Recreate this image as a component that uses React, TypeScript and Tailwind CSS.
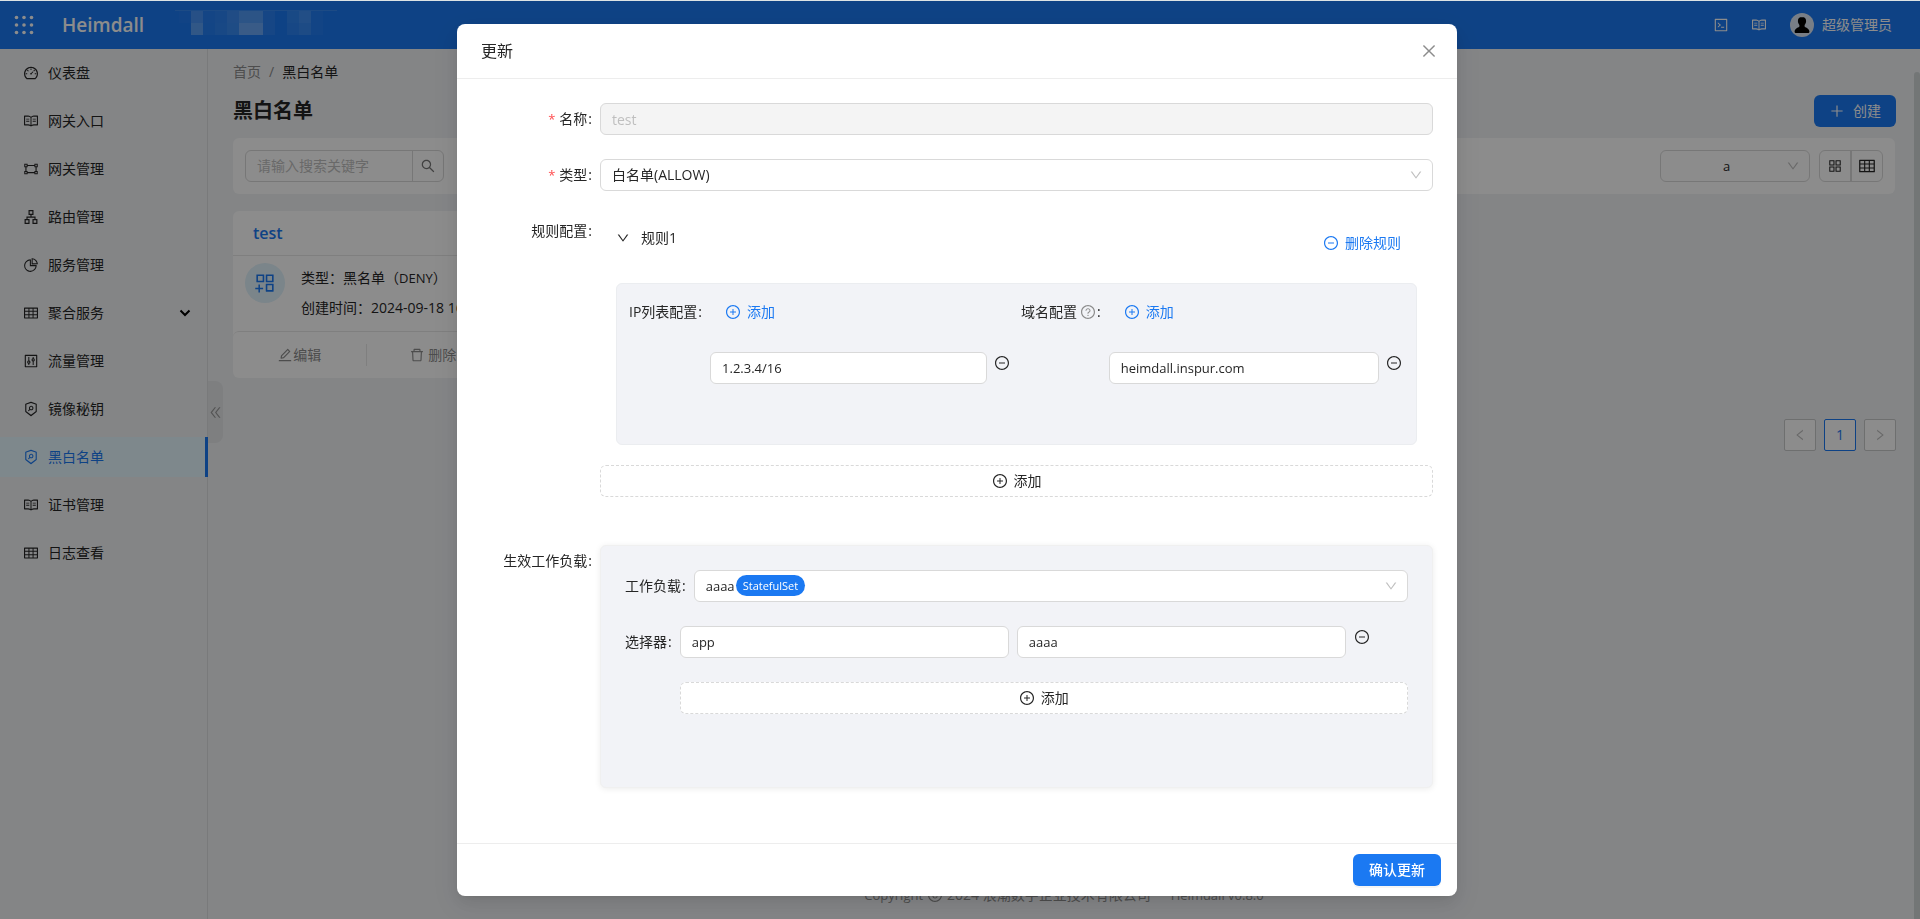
import React, { useId } from 'react';
import {
  AiOutlineApartment,
  AiOutlineAppstore,
  AiOutlineAppstoreAdd,
  AiOutlineClose,
  AiOutlineCode,
  AiOutlineControl,
  AiOutlineCopyright,
  AiOutlineDashboard,
  AiOutlineDelete,
  AiOutlineDoubleLeft,
  AiOutlineDown,
  AiOutlineEdit,
  AiOutlineEye,
  AiOutlineGateway,
  AiOutlineLeft,
  AiOutlineMinusCircle,
  AiOutlinePieChart,
  AiOutlinePlus,
  AiOutlinePlusCircle,
  AiOutlineQuestionCircle,
  AiOutlineRead,
  AiOutlineRight,
  AiOutlineSearch,
  AiOutlineSecurityScan,
  AiOutlineTable,
} from 'react-icons/ai';
import type { IconType } from 'react-icons';

interface MenuItem {
  label: string;
  icon: IconType;
  active?: boolean;
  expandable?: boolean;
}

const MENU: MenuItem[] = [
  { label: '仪表盘', icon: AiOutlineDashboard },
  { label: '网关入口', icon: AiOutlineRead },
  { label: '网关管理', icon: AiOutlineGateway },
  { label: '路由管理', icon: AiOutlineApartment },
  { label: '服务管理', icon: AiOutlinePieChart },
  { label: '聚合服务', icon: AiOutlineTable, expandable: true },
  { label: '流量管理', icon: AiOutlineControl },
  { label: '镜像秘钥', icon: AiOutlineSecurityScan },
  { label: '黑白名单', icon: AiOutlineSecurityScan, active: true },
  { label: '证书管理', icon: AiOutlineRead },
  { label: '日志查看', icon: AiOutlineTable },
];

// [x, y, opacity] of the blurred tenant name
const TENANT_BLOCKS = [
  [4, 1, 0.02], [16, 1, 0.2], [28, 1, 0.05], [40, 1, 0.07], [52, 1, 0.14], [64, 1, 0.24], [76, 1, 0.24], [88, 1, 0.06],
  [112, 1, 0.09], [124, 1, 0.16], [136, 1, 0.03],
  [16, 13, 0.28], [28, 13, 0.04], [40, 13, 0.08], [52, 13, 0.13], [64, 13, 0.34], [76, 13, 0.34], [88, 13, 0.06],
  [112, 13, 0.07], [124, 13, 0.12], [136, 13, 0.03],
];

const inputClass =
  'h-8 w-full min-w-0 rounded-md border border-[#d9d9d9] bg-white text-[13px] text-[#262626] outline-none';

const Header: React.FC = () => (
  <header className="flex h-12 items-center bg-[#1b79f2] pl-[14px] pr-7 text-white">
    <button type="button" aria-label="应用">
      <svg width="20" height="20" viewBox="0 0 20 20" fill="currentColor">
        {[2.5, 10, 17.5].map((y) => [2.5, 10, 17.5].map((x) => <circle key={`${x}-${y}`} cx={x} cy={y} r="1.8" />))}
      </svg>
    </button>
    <span className="ml-7 w-[81px] text-[19px] font-semibold">Heimdall</span>
    <svg className="mb-1 ml-8" width="162" height="26" viewBox="0 0 162 26" fill="#fff">
      <rect width="162" height="1" opacity="0.12" />
      {TENANT_BLOCKS.map(([x, y, opacity]) => (
        <rect key={`${x}-${y}`} x={x} y={y} width="12" height="12" opacity={opacity} />
      ))}
    </svg>
    <div className="ml-auto flex items-center">
      <button type="button" aria-label="终端">
        <AiOutlineCode size={16} />
      </button>
      <button type="button" aria-label="文档" className="ml-[22px]">
        <AiOutlineRead size={16} />
      </button>
      <svg className="ml-[23px] mr-2" width="24" height="24" viewBox="0 0 24 24">
        <circle cx="12" cy="12" r="12" fill="#dbe6f5" />
        <path
          d="M12 4c-2.600 0-4.100 1.600-4.100 4 0 1.400.5 2.900 1.500 3.900v1.500c0 1-4.800 1.500-4.800 5.100 0 1 .5 1.500 1.500 1.500h11.800c1 0 1.500-.5 1.500-1.500 0-3.600-4.800-4.100-4.800-5.100v-1.500c1-1 1.500-2.500 1.500-3.900 0-2.400-1.500-4-4.100-4z"
          fill="#000"
        />
      </svg>
      <span>超级管理员</span>
    </div>
  </header>
);

const Sidebar: React.FC = () => (
  <aside className="relative w-52 shrink-0 border-r border-[#dcdee1]">
    <nav className="flex flex-col gap-2 pt-1">
      {MENU.map(({ label, icon: Icon, active, expandable }) => (
        <a
          key={label}
          href="#"
          className={`-mr-px flex h-10 items-center gap-[9px] border-r-[3px] pl-[23px] pr-[14px] ${
            active ? 'border-[#1b79f2] bg-[#e6f7ff] text-[#1b79f2]' : 'border-transparent text-[#262626]'
          }`}
        >
          <Icon size={16} />
          <span>{label}</span>
          {expandable && (
            <svg className="ml-auto" width="12" height="8" viewBox="0 0 12 8" fill="none" stroke="#000" strokeWidth="2">
              <path d="M1.500 1.500 6 6l4.500-4.500" />
            </svg>
          )}
        </a>
      ))}
    </nav>
    <button
      type="button"
      aria-label="收起菜单"
      className="absolute left-52 top-[332px] flex h-[62px] w-[15px] items-center justify-center rounded-r-lg bg-[#e5e7e9] text-[#999]"
    >
      <AiOutlineDoubleLeft size={15} />
    </button>
  </aside>
);

const Toolbar: React.FC = () => (
  <div className="mt-[11px] flex h-14 items-center rounded-md bg-white px-3">
    <form className="flex h-8 w-[199px] rounded-md border border-[#d9d9d9]">
      <input
        aria-label="搜索"
        placeholder="请输入搜索关键字"
        className="min-w-0 flex-1 bg-transparent px-[11px] outline-none placeholder:text-[#bfbfbf]"
      />
      <button type="button" aria-label="搜索" className="flex w-[31px] items-center justify-center border-l border-[#d9d9d9] text-[#777]">
        <AiOutlineSearch size={16} />
      </button>
    </form>
    <div className="relative ml-auto w-[150px]">
      <select aria-label="命名空间" className={`${inputClass} appearance-none pl-[11px] pr-7 text-center [text-align-last:center]`}>
        <option>a</option>
      </select>
      <AiOutlineDown size={14} className="pointer-events-none absolute right-[10px] top-[9px] text-[#bfbfbf]" />
    </div>
    <div className="ml-[9px] flex h-8 w-16 rounded-md border border-[#d9d9d9] text-[#262626]">
      <button type="button" aria-label="卡片" className="flex flex-1 items-center justify-center">
        <AiOutlineAppstore size={16} />
      </button>
      <button type="button" aria-label="列表" className="flex flex-1 items-center justify-center border-l-2 border-[#d9d9d9]">
        <AiOutlineTable size={18} />
      </button>
    </div>
  </div>
);

const RuleCard: React.FC = () => (
  <article className="rounded-md bg-white">
    <h2 className="flex h-[45px] items-center border-b border-[#e8e8e8] px-5 text-base font-semibold text-[#1b79f2]">test</h2>
    <div className="flex gap-4 px-3 pb-2 pt-[7px]">
      <div className="flex size-10 items-center justify-center rounded-full bg-[#e0f2fb] text-[#1b79f2]">
        <AiOutlineAppstoreAdd size={24} />
      </div>
      <div className="flex flex-col text-[#262626]">
        <span className="leading-[30px]">
          类型：黑名单（<span className="text-[13px]">DENY</span>）
        </span>
        <span className="leading-[30px]">创建时间：2024-09-18 16:02:11</span>
      </div>
    </div>
    <div className="grid h-[47px] grid-cols-3 items-center rounded-md border-t border-[#e8e8e8] text-[#8c8c8c]">
      <button type="button" className="flex h-[22px] items-center justify-center border-r border-[#e8e8e8]">
        <AiOutlineEdit size={16} />
        编辑
      </button>
      <button type="button" className="flex h-[22px] items-center justify-center gap-[3px] border-r border-[#e8e8e8]">
        <AiOutlineDelete size={16} />
        删除
      </button>
      <button type="button" className="flex h-[22px] items-center justify-center gap-[3px]">
        <AiOutlineEye size={16} />
        查看
      </button>
    </div>
  </article>
);

const Pagination: React.FC = () => (
  <div className="-mr-px mt-[41px] flex justify-end gap-2">
    <button type="button" aria-label="上一页" className="flex size-8 items-center justify-center rounded-xs border border-[#c8cacb] bg-white text-[#bfbfbf]">
      <AiOutlineLeft size={14} />
    </button>
    <button type="button" className="flex size-8 items-center justify-center rounded-xs border border-[#1b79f2] bg-white font-medium text-[#1b79f2]">
      1
    </button>
    <button type="button" aria-label="下一页" className="flex size-8 items-center justify-center rounded-xs border border-[#c8cacb] bg-white text-[#bfbfbf]">
      <AiOutlineRight size={14} />
    </button>
  </div>
);

const Label: React.FC<{ htmlFor?: string; required?: boolean; children: React.ReactNode }> = ({
  htmlFor,
  required,
  children,
}) => (
  <label htmlFor={htmlFor} className="flex h-8 shrink-0 items-center justify-end whitespace-nowrap pr-2">
    {required && <span className="mr-1 text-[13px] text-[#ff4d4f]">*</span>}
    {children}
    <span className="ml-px">:</span>
  </label>
);

const FormRow: React.FC<{ label: string; htmlFor?: string; required?: boolean; children: React.ReactNode }> = ({
  label,
  htmlFor,
  required,
  children,
}) => (
  <div className="grid grid-cols-[1fr_7fr]">
    <Label htmlFor={htmlFor} required={required}>
      {label}
    </Label>
    <div className="min-w-0">{children}</div>
  </div>
);

const DashedAdd: React.FC = () => (
  <button type="button" className="flex h-8 w-full items-center justify-center gap-[6px] rounded-md border border-dashed border-[#d9d9d9] bg-white">
    <AiOutlinePlusCircle size={16} />
    添加
  </button>
);

const RemoveButton: React.FC = () => (
  <button type="button" aria-label="移除" className="mt-[3px] flex h-4 shrink-0">
    <AiOutlineMinusCircle size={16} />
  </button>
);

const ListField: React.FC<{ label: React.ReactNode; value: string }> = ({ label, value }) => {
  const id = useId();
  return (
    <div className="flex pr-[11px]">
      <Label htmlFor={id}>{label}</Label>
      <div className="flex min-w-0 flex-1 flex-col gap-6">
        <button type="button" className="flex h-8 items-center gap-[6px] px-[15px] text-[#1b79f2]">
          <AiOutlinePlusCircle size={16} />
          添加
        </button>
        <div className="flex gap-[7px]">
          <input id={id} defaultValue={value} className={`${inputClass} px-[11px]`} />
          <RemoveButton />
        </div>
      </div>
    </div>
  );
};

const UpdateDialog: React.FC = () => (
  <div
    role="dialog"
    aria-label="更新"
    className="mx-auto w-full max-w-[1000px] rounded-lg bg-white text-[#262626] shadow-[0_3px_6px_-4px_rgba(0,0,0,0.12),0_6px_16px_0_rgba(0,0,0,0.08),0_9px_28px_8px_rgba(0,0,0,0.05)]"
  >
    <div className="flex h-[55px] items-center justify-between border-b border-[#ededed] pl-6 pr-[19px]">
      <h2 className="text-base">更新</h2>
      <button type="button" aria-label="关闭" className="text-[#8c8c8c]">
        <AiOutlineClose size={18} />
      </button>
    </div>

    <div className="flex flex-col gap-6 px-6 pb-[55px] pt-6">
      <FormRow label="名称" htmlFor="name" required>
        <input
          id="name"
          disabled
          defaultValue="test"
          className="h-8 w-full rounded-md border border-[#d9d9d9] bg-[#f4f4f4] px-[11px] text-sm text-[#bfbfbf]"
        />
      </FormRow>

      <FormRow label="类型" htmlFor="type" required>
        <div className="relative">
          <select id="type" className="h-8 w-full appearance-none rounded-md border border-[#d9d9d9] bg-white px-[11px] text-sm">
            <option>白名单(ALLOW)</option>
          </select>
          <AiOutlineDown size={14} className="pointer-events-none absolute right-[10px] top-[9px] text-[#bfbfbf]" />
        </div>
      </FormRow>

      <FormRow label="规则配置">
        <div className="mb-5 px-4">
          <div className="flex h-[68px] items-start justify-between pt-3">
            <button type="button" className="flex h-[22px] items-center gap-[11px]">
              <AiOutlineDown size={14} />
              规则1
            </button>
            <button type="button" className="flex h-8 items-center gap-[6px] pr-4 text-[#1b79f2]">
              <AiOutlineMinusCircle size={16} />
              删除规则
            </button>
          </div>
          <div className="grid grid-cols-2 rounded-md border border-[#ebedf0] bg-[#f2f3f7] pb-[60px] pl-3 pr-[3px] pt-3">
            <ListField label="IP列表配置" value="1.2.3.4/16" />
            <ListField
              label={
                <>
                  域名配置
                  <AiOutlineQuestionCircle size={16} className="ml-[3px] text-[#8c8c8c]" />
                </>
              }
              value="heimdall.inspur.com"
            />
          </div>
        </div>
        <DashedAdd />
      </FormRow>

      <div className="pt-6">
        <FormRow label="生效工作负载">
          <div className="flex flex-col gap-6 rounded-md border border-[#f0f0f0] bg-[#f2f3f7] px-6 pb-[73px] pt-6 shadow-[0_1px_6px_rgba(0,0,0,0.08)]">
            <div className="flex">
              <Label htmlFor="workload">工作负载</Label>
              <div className="relative flex-1">
                <select id="workload" className={`${inputClass} appearance-none px-[11px]`}>
                  <option>aaaa</option>
                </select>
                <span className="pointer-events-none absolute left-[42px] top-[5px] flex h-[21px] items-center rounded-full bg-[#1b79f2] px-[7px] text-[11px] font-medium text-white">
                  StatefulSet
                </span>
                <AiOutlineDown size={14} className="pointer-events-none absolute right-[10px] top-[9px] text-[#bfbfbf]" />
              </div>
            </div>
            <div className="flex">
              <Label htmlFor="selector-key">选择器</Label>
              <div className="flex flex-1 flex-col gap-6">
                <div className="flex gap-2 pr-[38px]">
                  <input id="selector-key" defaultValue="app" className={`${inputClass} px-[11px]`} />
                  <input aria-label="选择器值" defaultValue="aaaa" className={`${inputClass} px-[11px]`} />
                  <RemoveButton />
                </div>
                <DashedAdd />
              </div>
            </div>
          </div>
        </FormRow>
      </div>
    </div>

    <div className="flex justify-end border-t border-[#ededed] px-4 py-[10px]">
      <button type="button" className="h-8 rounded-md bg-[#1b79f2] px-4 font-medium text-white shadow-[0_2px_0_rgba(0,0,0,0.04)]">
        确认更新
      </button>
    </div>
  </div>
);

const App: React.FC = () => {
  return (
    <div className="relative flex min-h-screen flex-col border-t border-[#dde3e4] bg-[#f0f2f5] font-['Open_Sans','Noto_Sans_CJK_SC',sans-serif] text-sm leading-[22px]">
      <Header />
      <div className="flex flex-1">
        <Sidebar />
        <main className="flex flex-1 flex-col px-[25px] pb-[13px] pt-3">
          <nav className="flex gap-2 text-[#8c8c8c]">
            <a href="#">首页</a>
            <span>/</span>
            <span className="text-[#262626]">黑白名单</span>
          </nav>
          <div className="-mr-px mt-3 flex h-8 items-center justify-between">
            <h1 className="text-xl font-bold text-[#262626]">黑白名单</h1>
            <button type="button" className="flex h-8 items-center gap-2 rounded-md bg-[#1b79f2] px-[15px] text-white">
              <AiOutlinePlus size={16} />
              创建
            </button>
          </div>
          <Toolbar />
          <div className="mt-[17px] grid grid-cols-4 gap-5">
            <RuleCard />
          </div>
          <Pagination />
          <footer className="mt-auto flex items-center justify-center gap-1 text-[#8c8c8c]">
            <span className="text-[13px]">Copyright</span>
            <AiOutlineCopyright size={16} />
            <span>2024 浪潮数字企业技术有限公司</span>
            <span className="ml-4 text-[13px]">Heimdall v0.8.0</span>
          </footer>
        </main>
      </div>
      <div className="absolute bottom-0 right-0 top-[71px] w-[6px] rounded-t bg-[#d2d8d8]" />

      <div className="fixed inset-x-0 bottom-0 top-px overflow-auto bg-black/45 pl-4 pr-[22px] pt-[23px]">
        <UpdateDialog />
      </div>
    </div>
  );
};

export default App;
